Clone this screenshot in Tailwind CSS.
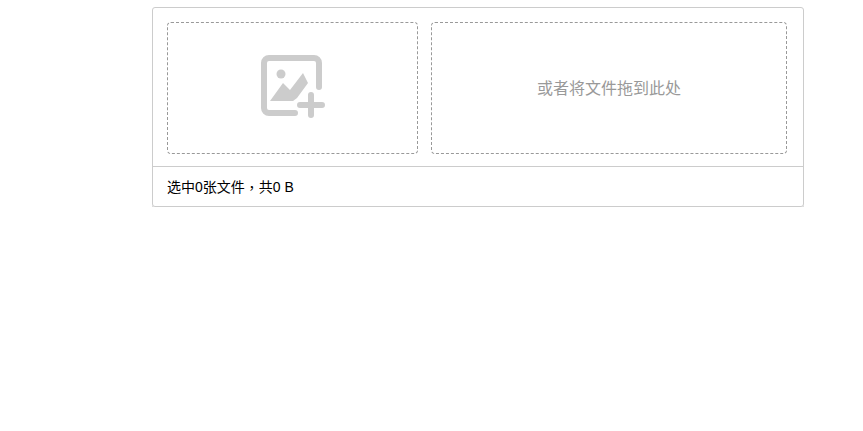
<!DOCTYPE html>
<html lang="zh-CN">
<head>
  <meta charset="UTF-8">
  <title>上传</title>
  <script src="https://cdn.jsdelivr.net/npm/@tailwindcss/browser@4"></script>
</head>
<body class="bg-white font-['Liberation_Sans','Noto_Sans_CJK_SC',sans-serif]">
  <div class="pt-[7px] pl-[152px]">
    <div class="w-[652px] border border-[#ccc] rounded-[3px] shadow-[0_1px_0_#ccc]">
      <div class="flex gap-[13px] pt-[14px] pl-[14px] pr-[16px] pb-[12px] border-b border-[#ccc]">
        <div class="w-[251px] h-[132px] pb-[2px] flex items-center justify-center border border-dashed border-[#999] rounded-[4px]">
          <svg width="66" height="66" viewBox="0 0 66 66" fill="none" stroke="#ccc" stroke-width="6" stroke-linecap="round">
            <path d="M35 59H9a5 5 0 0 1-5-5V9a5 5 0 0 1 5-5H54a5 5 0 0 1 5 5V33"/>
            <path d="M40 51H62M51 41V61"/>
            <circle cx="21" cy="20" r="4.5" fill="#ccc" stroke="none"/>
            <path d="M10 47L23 29L30 36L43 19L48 29L37 44L33 47Z" fill="#ccc" stroke="none"/>
          </svg>
        </div>
        <div class="w-[356px] h-[132px] pt-[2px] flex items-center justify-center border border-dashed border-[#999] rounded-[4px] text-[16px] text-[#999]">或者将文件拖到此处</div>
      </div>
      <div class="h-[39px] pt-[1px] pl-[14px] flex items-center whitespace-pre text-[14px] text-black">选中0张文件<span class="font-['Noto_Sans_CJK_TC']">，</span>共0 B</div>
    </div>
  </div>
</body>
</html>
